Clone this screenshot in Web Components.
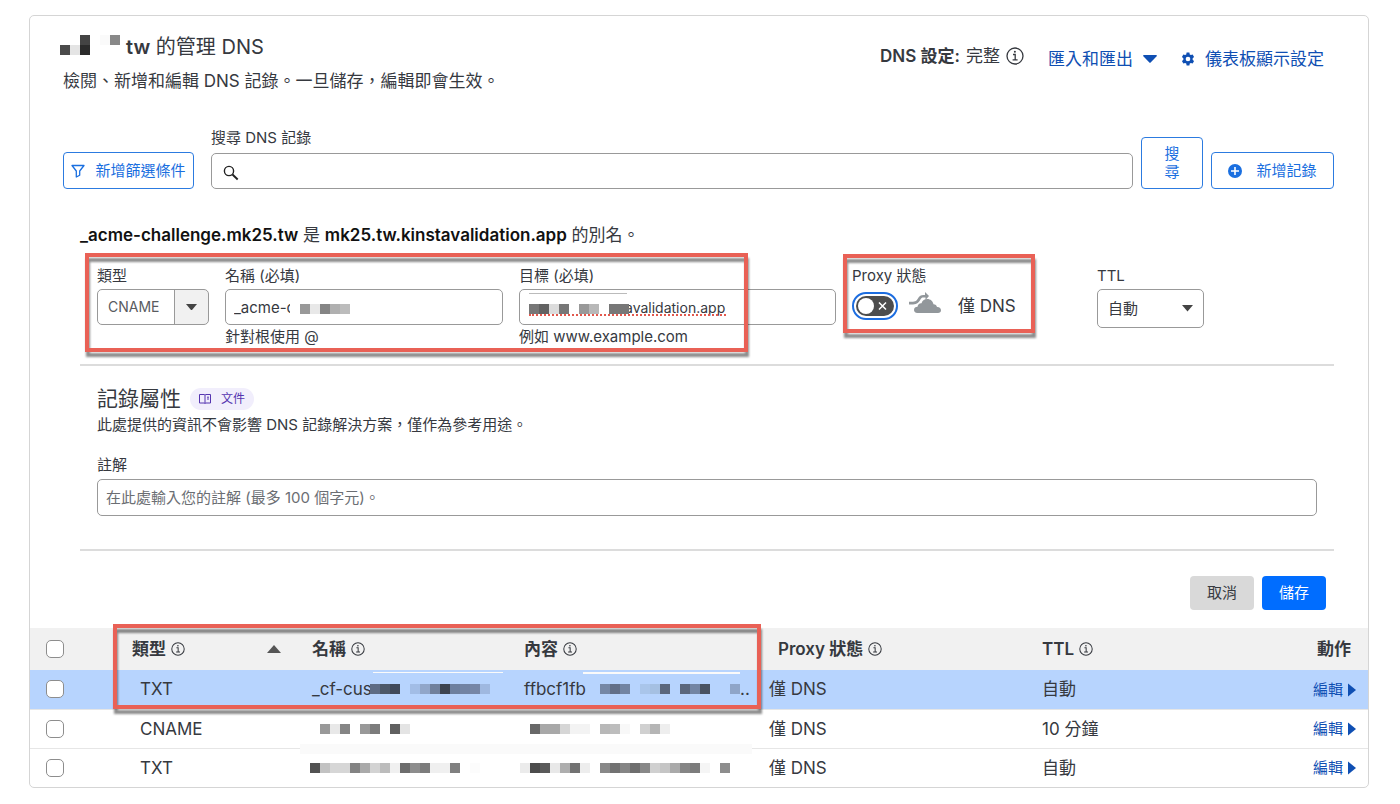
<!DOCTYPE html>
<html lang="zh-Hant">
<head>
<meta charset="utf-8">
<meta name="viewport" content="width=device-width, initial-scale=1">
<title>DNS 管理</title>
<style>
	body {
		margin: 0;
		padding: 15px 31px 16px 29px;
		background: #fff;
		color: #36393f;
		font-family: Inter, "Noto Sans CJK TC", sans-serif;
		font-size: 15px;
		line-height: 18px;
	}
</style>
</head>
<body>
<dns-panel>
	<dns-header></dns-header>
	<dns-search></dns-search>
	<record-form></record-form>
	<record-table></record-table>
</dns-panel>

<script>
const icons = {
	info: '<svg viewBox="0 0 18 18" fill="none" stroke="currentColor"><circle cx="9" cy="9" r="8" stroke-width="1.3"/><path d="M7 7.5h2.2v5M6.6 12.8h5" stroke-width="1.3"/><circle cx="8.9" cy="4.7" r="1" fill="currentColor" stroke="none"/></svg>',
	down: '<svg viewBox="0 0 14 8" fill="currentColor"><path d="M.8 0h12.4a.7.7 0 0 1 .5 1.2L7.6 7.6a.8.8 0 0 1-1.2 0L.3 1.2A.7.7 0 0 1 .8 0z"/></svg>',
	caret: '<svg viewBox="0 0 10 6" fill="currentColor"><path d="M0 0h10L5 6z"/></svg>',
	up: '<svg viewBox="0 0 14 8" fill="currentColor"><path d="M0 8h14L7 0z"/></svg>',
	right: '<svg viewBox="0 0 8 14" fill="currentColor"><path d="M0 .5 8 7 0 13.5z"/></svg>',
	gear: '<svg viewBox="0 0 24 24" fill="currentColor" fill-rule="evenodd"><path d="M9.6 1h4.8l.6 3.2 2 1.1 3-1.1 2.4 4.2-2.4 2.1v3l2.4 2.1-2.4 4.2-3-1.1-2 1.1-.6 3.2H9.6l-.6-3.2-2-1.1-3 1.1-2.4-4.2L4 13.5v-3L1.6 8.400 4 4.200l3 1.100 2-1.100zM12 8a4 4 0 1 0 0 8 4 4 0 0 0 0-8z"/></svg>',
	filter: '<svg viewBox="0 0 14 14" fill="none" stroke="currentColor" stroke-width="1.3" stroke-linejoin="round"><path d="M1 1.5h12L8.7 7v4.2L5.3 13V7z"/></svg>',
	plus: '<svg viewBox="0 0 14 14"><circle cx="7" cy="7" r="7" fill="currentColor"/><path d="M7 3v8M3 7h8" stroke="#fff" stroke-width="1.6"/></svg>',
	search: '<svg viewBox="0 0 16 16" fill="none" stroke="currentColor"><circle cx="6" cy="6" r="4.6" stroke-width="1.4"/><path d="m9.5 9.5 5.2 5" stroke-width="1.9"/></svg>',
	book: '<svg viewBox="0 0 12 10" fill="none" stroke="currentColor"><path d="M.5.5h4.7L6 1l.8-.5h4.7v8.5H6.8L6 9.5 5.2 9H.5zM6 1v8.5M8 3.2h2M8 5h2"/></svg>',
	cloud: '<svg viewBox="0 0 34 22" fill="#92979b"><path d="M1 9.800h4c3.500 0 4-2 5.200-3.700C11.400 4 12.800 3 15.500 3H17V0l4 4-3.500 4V5.600h-2c-1.600 0-2.300.6-3.200 2.200C10.800 10.300 9.500 12.500 5 12.500H1z"/><path d="M9.500 21C7 21 6 19.500 6 18c0-2 1.500-3.200 3.500-3.200.2-2.300 1.900-3.800 4-3.600C14.400 8.400 16.700 7 19.200 7c3.300 0 5.800 2.200 6.300 5.300 2 .1 3.200 1.200 3.500 2.700 2.400-.2 4 1.200 4 3.200 0 1.700-1.200 2.800-3 2.800z"/></svg>'
};

class UiIcon extends HTMLElement {
	constructor() {
		super();
		const size = this.getAttribute('size') || 14;
		this.attachShadow({ mode: 'open' }).innerHTML = /*html*/`
			<style>
				:host {
					display: inline-flex;
					flex: none;
				}
				svg {
					display: block;
					width: ${size}px;
				}
			</style>
			${icons[this.getAttribute('name')]}
		`;
		this.shadowRoot.querySelector('svg').setAttribute('aria-hidden', 'true');
	}
}

// Row of 10px squares over a private value. "-" leaves a gap, "/" starts a new line.
class PixelMask extends HTMLElement {
	constructor() {
		super();
		const rows = this.getAttribute('cells').split('/').map(row => row.trim().split(/\s+/));
		const cells = rows.flatMap((row, y) => row.map((color, x) =>
			color === '-' ? '' : `<rect x="${x * 10}" y="${y * 10}" width="10" height="10" fill="#${color}"/>`
		));
		this.attachShadow({ mode: 'open' }).innerHTML = /*html*/`
			<style>
				:host {
					display: inline-block;
					flex: none;
				}
				svg {
					display: block;
				}
			</style>
			<svg width="${rows[0].length * 10}" height="${rows.length * 10}" shape-rendering="crispEdges" aria-hidden="true">${cells.join('')}</svg>
		`;
	}
}

// Red callout frame laid over the area it is placed in
class CalloutFrame extends HTMLElement {
	constructor() {
		super();
		this.attachShadow({ mode: 'open' }).innerHTML = /*html*/`
			<style>
				:host {
					position: absolute;
					z-index: 2;
					box-sizing: border-box;
					border: 4px solid #e96156;
					filter: drop-shadow(1px 5px 1px rgba(0, 0, 0, .45));
					pointer-events: none;
				}
			</style>
		`;
	}
}

class UiButton extends HTMLElement {
	constructor() {
		super();
		this.attachShadow({ mode: 'open' }).innerHTML = /*html*/`
			<style>
				:host {
					display: block;
					flex: none;
				}
				button {
					display: flex;
					align-items: center;
					justify-content: center;
					gap: 10px;
					width: 100%;
					min-height: 37px;
					margin: 0;
					padding: 8px 0;
					border: 1px solid #2c7be0;
					border-radius: 4px;
					background: #fff;
					color: #1a6fe0;
					font: inherit;
					white-space: nowrap;
					cursor: pointer;
				}
				:host([variant="primary"]) button,
				:host([variant="muted"]) button {
					min-height: 34px;
					padding: 0 17px;
					border: 0;
				}
				:host([variant="primary"]) button {
					background: #006dff;
					color: #fff;
				}
				:host([variant="muted"]) button {
					background: #d9d9d9;
					color: #36393f;
				}
				:host([variant="wide"]) button {
					gap: 14px;
				}
				:host([variant="stacked"]) button {
					padding: 7px 22px;
					white-space: normal;
				}
			</style>
			<button type="button"><slot></slot></button>
		`;
	}
}

class FormField extends HTMLElement {
	constructor() {
		super();
		this.attachShadow({ mode: 'open' }).innerHTML = /*html*/`
			<style>
				:host {
					display: flex;
					flex-direction: column;
					min-width: 0;
				}
				.control {
					display: grid;
					margin-top: 4px;
				}
				slot[name="hint"] {
					display: block;
					margin-top: 3px;
				}
			</style>
			<slot name="label"></slot>
			<div class="control"><slot></slot></div>
			<slot name="hint"></slot>
		`;
	}
}

class DnsPanel extends HTMLElement {
	constructor() {
		super();
		this.attachShadow({ mode: 'open' }).innerHTML = /*html*/`
			<style>
				:host {
					display: block;
					overflow: hidden;
					border: 1px solid #d5d5d5;
					border-radius: 5px;
				}
			</style>
			<slot></slot>
		`;
	}
}

class DnsHeader extends HTMLElement {
	constructor() {
		super();
		this.attachShadow({ mode: 'open' }).innerHTML = /*html*/`
			<style>
				:host {
					display: flex;
					justify-content: space-between;
					padding: 17px 44px 0 33px;
					font-size: 17px;
				}
				h1 {
					display: flex;
					align-items: center;
					gap: 6px;
					margin: 0 0 8px -3px;
					font-size: 20px;
					font-weight: 400;
					line-height: 28px;
				}
				h1 pixel-mask {
					margin-bottom: 4px;
				}
				p {
					margin: 0;
					line-height: 24px;
				}
				b {
					font-weight: 600;
				}
				.actions {
					display: flex;
					align-items: flex-start;
					gap: 24px;
					margin-top: 12px;
				}
				.setup {
					display: flex;
					align-items: center;
					gap: 6px;
					line-height: 22px;
				}
				a {
					display: flex;
					align-items: center;
					gap: 10px;
					color: #0f4fb3;
					line-height: 28px;
					text-decoration: none;
				}
			</style>
			<div>
				<h1><pixel-mask cells="- - 444444 - fafafa 888888 / 4a4a4a e4e4e4 2b2b2b - - -"></pixel-mask><span><b>tw</b> 的管理 DNS</span></h1>
				<p>檢閱、新增和編輯 DNS 記錄。一旦儲存，編輯即會生效。</p>
			</div>
			<div class="actions">
				<span class="setup"><b>DNS 設定:</b> <span>完整</span> <ui-icon name="info" size="18"></ui-icon></span>
				<a href="#">匯入和匯出 <ui-icon name="down"></ui-icon></a>
				<a href="#"><ui-icon name="gear"></ui-icon> 儀表板顯示設定</a>
			</div>
		`;
	}
}

class DnsSearch extends HTMLElement {
	constructor() {
		super();
		this.attachShadow({ mode: 'open' }).innerHTML = /*html*/`
			<style>
				:host {
					display: flex;
					align-items: flex-end;
					gap: 8px;
					margin-top: 36px;
					padding: 0 34px 0 33px;
				}
				.search {
					flex: 1;
					margin-left: 9px;
				}
				.box {
					display: flex;
					align-items: center;
					gap: 8px;
					box-sizing: border-box;
					height: 36px;
					margin-top: 6px;
					padding: 4px 12px 0 11px;
					border: 1px solid #999;
					border-radius: 5px;
				}
				input {
					flex: 1;
					border: 0;
					outline: 0;
					background: none;
					font: inherit;
				}
				.narrow {
					width: 62px;
				}
				.filter {
					width: 131px;
				}
				.add {
					width: 123px;
				}
				.box ui-icon {
					color: #222;
				}
			</style>
			<ui-button class="filter"><ui-icon name="filter"></ui-icon>新增篩選條件</ui-button>
			<div class="search">
				<label for="query">搜尋 DNS 記錄</label>
				<div class="box"><ui-icon name="search" size="16"></ui-icon><input id="query" type="text"></div>
			</div>
			<ui-button class="narrow" variant="stacked">搜尋</ui-button>
			<ui-button class="add" variant="wide"><ui-icon name="plus"></ui-icon>新增記錄</ui-button>
		`;
	}
}

class ProxyToggle extends HTMLElement {
	constructor() {
		super();
		this.attachShadow({ mode: 'open' }).innerHTML = /*html*/`
			<style>
				:host {
					display: block;
				}
				span {
					display: block;
				}
				.row {
					display: flex;
					align-items: center;
					gap: 16px;
					height: 36px;
					margin-top: 3px;
					font-size: 17px;
				}
				label {
					display: flex;
					align-items: center;
					gap: 10px;
				}
				.switch {
					display: grid;
					align-items: center;
				}
				.switch > * {
					grid-area: 1 / 1;
				}
				input {
					appearance: none;
					box-sizing: border-box;
					width: 46px;
					height: 28px;
					margin: 0;
					border: 2px solid #1c6de0;
					border-radius: 14px;
				}
				.switch svg {
					justify-self: center;
					pointer-events: none;
				}
				label ui-icon {
					margin-bottom: 6px;
				}
			</style>
			<span>Proxy 狀態</span>
			<div class="row">
				<label>
					<span class="switch">
						<input type="checkbox" role="switch" aria-label="Proxy 狀態">
						<svg width="38" height="20" viewBox="0 0 38 20"><rect width="38" height="20" rx="10" fill="#4d4d4d"/><circle cx="10" cy="10" r="8" fill="#fff"/><path d="m23 6.5 7 7m0-7-7 7" stroke="#fff" stroke-width="1.5"/></svg>
					</span>
					<ui-icon name="cloud" size="34"></ui-icon>
				</label>
				<span>僅 DNS</span>
			</div>
		`;
	}
}

class RecordForm extends HTMLElement {
	constructor() {
		super();
		this.attachShadow({ mode: 'open' }).innerHTML = /*html*/`
			<style>
				:host {
					display: block;
					margin-top: 34px;
					padding: 0 34px 18px 50px;
				}
				.alias {
					margin: 0;
					font-size: 17px;
					line-height: 24px;
				}
				.alias b {
					color: #111;
					font-weight: 600;
				}
				.row {
					display: flex;
					gap: 16px;
					padding: 20px 17px 18px;
				}
				.fields {
					position: relative;
					display: grid;
					flex: 1;
					grid-template-columns: 112px 278fr 317fr;
					gap: 16px;
				}
				.fields callout-frame {
					inset: -14px 88px -6px -12px;
				}
				.proxy {
					position: relative;
					width: 229px;
				}
				.proxy callout-frame {
					top: -13px;
					left: -9px;
					width: 192px;
					height: 79px;
				}
				.ttl {
					width: 220px;
				}
				input, select {
					grid-area: 1 / 1;
					box-sizing: border-box;
					width: 100%;
					height: 36px;
					margin: 0;
					padding: 0 8px;
					border: 1px solid #999;
					border-radius: 5px;
					background: #fff;
					color: #36393f;
					font: inherit;
				}
				input::placeholder {
					color: #6b6e73;
					opacity: 1;
				}
				select {
					appearance: none;
					padding: 0 10px;
				}
				#type {
					background: linear-gradient(90deg, #fff 76px, #999 76px 77px, #f1f1f1 77px);
					color: #595b5f;
				}
				#ttl {
					width: 107px;
					height: 39px;
				}
				#type, #target {
					font-size: 14px;
				}
				form-field > ui-icon {
					grid-area: 1 / 1;
					align-self: center;
					margin-left: 89px;
					pointer-events: none;
					color: #444;
				}
				form-field.ttl > ui-icon {
					margin-left: 85px;
				}
				.redacted {
					grid-area: 1 / 1;
					z-index: 1;
					position: relative;
					align-self: center;
					justify-self: start;
					pointer-events: none;
				}
				.redacted pixel-mask {
					display: block;
				}
				.name-mask {
					margin: 4px 0 0 65px;
					padding: 6px 0 6px 10px;
					background: #fff;
				}
				.target-mask {
					width: 197px;
					margin: 6px 0 0 10px;
					border-bottom: 2px dotted #e2584d;
				}
				.target-mask::before {
					content: "";
					position: absolute;
					top: -11px;
					left: 0;
					width: 98px;
					height: 1px;
					background: #bbb;
				}
				#target {
					padding-left: 105px;
				}
				.divider {
					margin: 0;
					border: 0;
					border-top: 2px solid #dcdcdc;
				}
				.properties {
					padding: 19px 17px 30px;
				}
				.properties label {
					line-height: 20px;
				}
				.heading {
					display: flex;
					align-items: center;
					gap: 9px;
				}
				h2 {
					margin: 0;
					font-size: 21px;
					font-weight: 400;
					line-height: 28px;
				}
				.docs {
					display: flex;
					align-items: center;
					gap: 10px;
					padding: 2px 9px;
					border-radius: 11px;
					background: #f1eefc;
					color: #5535b0;
					font-size: 12px;
					text-decoration: none;
				}
				.properties p {
					margin: 2px 0 20px;
					line-height: 20px;
				}
				#comment {
					height: 37px;
				}
				.buttons {
					display: flex;
					justify-content: flex-end;
					gap: 8px;
					margin: 25px 8px 0 0;
				}
			</style>
			<p class="alias"><b>_acme-challenge.mk25.tw</b> 是 <b>mk25.tw.kinstavalidation.app</b> 的別名。</p>
			<div class="row">
				<div class="fields">
					<form-field>
						<label slot="label" for="type">類型</label>
						<select id="type"><option>CNAME</option></select>
						<ui-icon name="caret" size="11"></ui-icon>
					</form-field>
					<form-field>
						<label slot="label" for="name">名稱 (必填)</label>
						<input id="name" type="text" value="_acme-c" spellcheck="false">
						<span class="redacted name-mask"><pixel-mask cells="999999 e8e8e8 858585 b0b0b0 bcbcbc"></pixel-mask></span>
						<span slot="hint">針對根使用 @</span>
					</form-field>
					<form-field>
						<label slot="label" for="target">目標 (必填)</label>
						<input id="target" type="text" value="avalidation.app" spellcheck="false">
						<span class="redacted target-mask"><pixel-mask cells="777777 626262 dcdcdc 777777 - 999999 b8b8b8 - 777777 777777"></pixel-mask></span>
						<span slot="hint">例如 www.example.com</span>
					</form-field>
					<callout-frame></callout-frame>
				</div>
				<div class="proxy">
					<proxy-toggle></proxy-toggle>
					<callout-frame></callout-frame>
				</div>
				<form-field class="ttl">
					<label slot="label" for="ttl">TTL</label>
					<select id="ttl"><option>自動</option></select>
					<ui-icon name="caret" size="11"></ui-icon>
				</form-field>
			</div>
			<hr class="divider">
			<div class="properties">
				<div class="heading"><h2>記錄屬性</h2><a class="docs" href="#"><ui-icon name="book" size="12"></ui-icon>文件</a></div>
				<p>此處提供的資訊不會影響 DNS 記錄解決方案，僅作為參考用途。</p>
				<form-field>
					<label slot="label" for="comment">註解</label>
					<input id="comment" type="text" placeholder="在此處輸入您的註解 (最多 100 個字元)。">
				</form-field>
			</div>
			<hr class="divider">
			<div class="buttons">
				<ui-button variant="muted">取消</ui-button>
				<ui-button variant="primary">儲存</ui-button>
			</div>
		`;
	}
}

const records = [
	{
		type: 'TXT', ttl: '自動', selected: true,
		name: '_cf-cus', nameMask: '5e6c85 4d5868 40495a - a2bde6 91a6c9 70809c 3d4450 6d7f9e 7283a3 7686a6 9fb8e0',
		content: 'ffbcf1fb', contentMask: '- 7587a5 626f88 7284a2 - a9c5ea a5c0e2 5b677c - 5b677c 7385a3 4a5362 - - 8fa5c8', tail: '..'
	},
	{
		type: 'CNAME', ttl: '10 分鐘',
		nameMask: '- 999999 e8e8e8 858585 - 999999 7c7c7c - 606060 e4e4e4',
		contentMask: '- 686868 a8a8a8 a8a8a8 d6d6d6 f3f3f3 f3f3f3 - b8b8b8 bdbdbd f8f8f8 - d0d0d0 b5b5b5 eeeeee'
	},
	{
		type: 'TXT', ttl: '自動',
		nameMask: '525252 c2c2c2 d6d6d6 d6d6d6 838383 aaaaaa d3d3d3 bcbcbc f0f0f0 6d6d6d 8d8d8d 7c7c7c efefef f0f0f0 808080 - fcfcfc',
		contentMask: 'ebebeb 4c4c4c 5a5a5a e8e8e8 aeaeae 727272 ededed - 888888 727272 858585 6e6e6e 888888 d0d0d0 c5c5c5 aaaaaa 858585 7c7c7c f5f5f5 - 8d8d8d'
	}
];

class RecordTable extends HTMLElement {
	constructor() {
		super();
		const mask = cells => `<pixel-mask cells="${cells}"></pixel-mask>`;
		const rows = records.map((r, i) => /*html*/`
			<tr class="${r.selected ? 'selected' : ''}">
				<td class="pick"><input type="checkbox" aria-label="${r.type} ${i + 1}"></td>
				<td class="type">${r.type}</td>
				<td class="name ${r.name ? '' : 'masked'}"><div>${r.name ? `<span>${r.name}</span>` : ''}${mask(r.nameMask)}</div></td>
				<td class="content ${r.content ? '' : 'masked'}"><div>${r.content ? `<span>${r.content}</span>` : ''}${mask(r.contentMask)}${r.tail || ''}</div></td>
				<td>僅 DNS</td>
				<td>${r.ttl}</td>
				<td class="action"><a href="#">編輯<ui-icon name="right" size="8"></ui-icon></a></td>
			</tr>
		`).join('');

		this.attachShadow({ mode: 'open' }).innerHTML = /*html*/`
			<style>
				:host {
					display: block;
					position: relative;
					font-size: 17px;
				}
				table {
					width: 100%;
					table-layout: fixed;
					border-collapse: collapse;
				}
				th, td {
					box-sizing: border-box;
					height: 39px;
					padding: 0;
					text-align: left;
					white-space: nowrap;
				}
				th {
					height: 42px;
					background: #f1f1f1;
					font-weight: 600;
				}
				th > span, td > div {
					display: flex;
					align-items: center;
					gap: 5px;
				}
				td > div {
					gap: 0;
				}
				tbody tr + tr td {
					border-top: 1px solid #e6e6e6;
				}
				.selected td {
					background: #b7d4fe;
				}
				.pick {
					padding-left: 16px;
				}
				.type {
					padding-left: 8px;
				}
				.sort {
					margin-left: auto;
					margin-right: 31px;
					color: #555;
				}
				.proxy {
					padding-left: 9px;
				}
				.name span {
					width: 58px;
				}
				.content span {
					width: 66px;
				}
				.name.masked div {
					margin-left: -2px;
				}
				.content.masked div {
					margin-left: -4px;
				}
				.action {
					padding-right: 12px;
					text-align: right;
				}
				th.action {
					padding-right: 17px;
				}
				input {
					display: block;
					appearance: none;
					box-sizing: border-box;
					width: 18px;
					height: 18px;
					margin: 0;
					border: 1px solid #8d8d8d;
					border-radius: 5px;
					background: #fff;
				}
				a {
					display: inline-flex;
					align-items: center;
					gap: 5px;
					color: #0f4fb3;
					font-size: 15px;
					text-decoration: none;
				}
				callout-frame {
					top: -4px;
					left: 83px;
					width: 648px;
					height: 85px;
				}
				.smudge {
					position: absolute;
					background: #fafafa;
				}
				.smudge.name {
					top: 44px;
					left: 343px;
					width: 130px;
					height: 1px;
				}
				.smudge.content {
					top: 44px;
					left: 553px;
					width: 157px;
					height: 2px;
				}
				.smudge.rows {
					top: 116px;
					left: 270px;
					width: 452px;
					height: 10px;
				}
			</style>
			<table>
				<colgroup>
					<col style="width: 102px">
					<col style="width: 180px">
					<col style="width: 212px">
					<col style="width: 245px">
					<col style="width: 273px">
					<col>
					<col style="width: 80px">
				</colgroup>
				<thead>
					<tr>
						<th class="pick"><input type="checkbox" aria-label="全選"></th>
						<th><span>類型 <ui-icon name="info"></ui-icon><ui-icon class="sort" name="up"></ui-icon></span></th>
						<th><span>名稱 <ui-icon name="info"></ui-icon></span></th>
						<th><span>內容 <ui-icon name="info"></ui-icon></span></th>
						<th class="proxy"><span>Proxy 狀態 <ui-icon name="info"></ui-icon></span></th>
						<th><span>TTL <ui-icon name="info"></ui-icon></span></th>
						<th class="action">動作</th>
					</tr>
				</thead>
				<tbody>${rows}</tbody>
			</table>
			<div class="smudge name"></div>
			<div class="smudge content"></div>
			<div class="smudge rows"></div>
			<callout-frame></callout-frame>
		`;
	}
}

customElements.define('ui-icon', UiIcon);
customElements.define('pixel-mask', PixelMask);
customElements.define('callout-frame', CalloutFrame);
customElements.define('ui-button', UiButton);
customElements.define('form-field', FormField);
customElements.define('proxy-toggle', ProxyToggle);
customElements.define('dns-panel', DnsPanel);
customElements.define('dns-header', DnsHeader);
customElements.define('dns-search', DnsSearch);
customElements.define('record-form', RecordForm);
customElements.define('record-table', RecordTable);
</script>
</body>
</html>
